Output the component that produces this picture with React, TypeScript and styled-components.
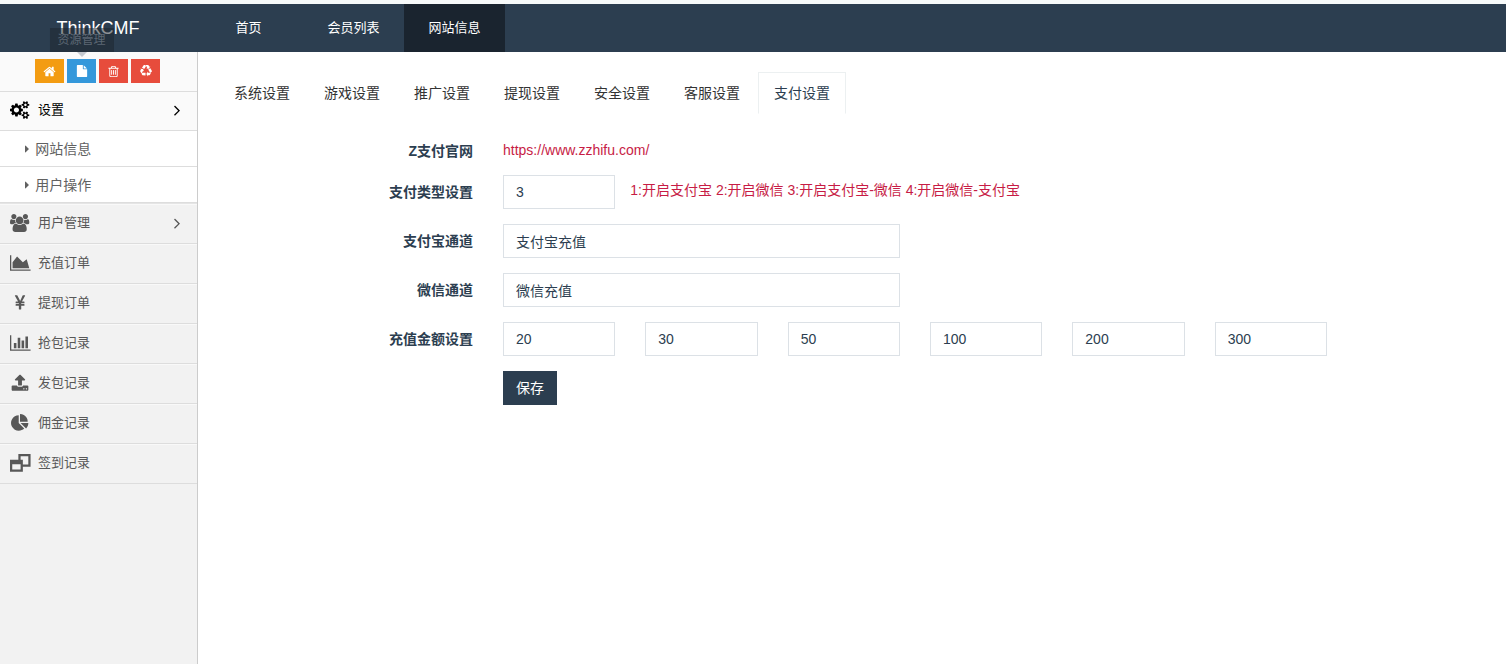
import React from "react";
import styled, { createGlobalStyle } from "styled-components";

const GlobalStyle = createGlobalStyle`
  *, *::before, *::after { box-sizing: border-box; }
  body {
    margin: 0;
    background: #fff;
    color: #2c3e50;
    font: 14px/20px "Liberation Sans", "Noto Sans CJK SC", sans-serif;
  }
  ul { list-style: none; margin: 0; padding: 0; }
  a { color: inherit; text-decoration: none; }
  button, input { font: inherit; }
`;

const smallCog =
  "v140q0 16-149 31-12 27-30 52 51 113 51 138 0 4-4 7-122 71-124 71-8 0-46-47t-52-68q-20 2-30 2t-30-2q-14 21-52 68t-46 47q-2 0-124-71-4-3-4-7 0-25 51-138-18-25-30-52-149-15-149-31v-140q0-16 149-31 13-29 30-52-51-113-51-138 0-4 4-7 4-2 35-20t59-34 30-16q8 0 46 46.5t52 67.5q20-2 30-2t30 2q51-71 92-112l6-2q4 0 124 70 4 3 4 7 0 25-51 138 17 23 30 52 149 15 149 31z";

const bar = "v576q0 14-9 23t-23 9h-64q-14 0-23-9t-9-23v-576q0-14 9-23t23-9h64q14 0 23 9t9 23z";

const icons = {
  home: {
    w: 1792,
    d: "M1472 992v480q0 26-19 45t-45 19h-384v-384h-256v384h-384q-26 0-45-19t-19-45v-480q0-1 .5-3t.5-3l575-474 575 474q1 2 1 6zm223-69l-62 74q-8 9-21 11h-3q-13 0-21-7l-692-577-692 577q-12 8-24 7-13-2-21-11l-62-74q-8-10-7-23.5t11-21.5l719-599q32-26 76-26t76 26l244 204v-195q0-14 9-23t23-9h192q14 0 23 9t9 23v408l219 182q10 8 11 21.5t-7 23.5z",
  },
  file: {
    w: 1792,
    d: "M1152 512v-472q22 14 36 28l408 408q14 14 28 36h-472zm-128 32q0 40 28 68t68 28h544v1056q0 40-28 68t-68 28h-1344q-40 0-68-28t-28-68v-1600q0-40 28-68t68-28h800v544z",
  },
  trash: {
    w: 1792,
    d: `M704 736${bar}M960 736${bar}M1216 736${bar}M1344 1460v-948h-896v948q0 22 7 40.5t14.5 27 10.5 8.5h832q3 0 10.5-8.5t14.5-27 7-40.5zm-672-1076h448l-48-117q-7-9-17-11h-317q-10 2-17 11zm928 32v64q0 14-9 23t-23 9h-96v948q0 83-47 143.5t-113 60.5h-832q-66 0-113-58.5t-47-141.5v-952h-96q-14 0-23-9t-9-23v-64q0-14 9-23t23-9h309l70-167q15-37 54-63t79-26h320q40 0 79 26t54 63l70 167h309q14 0 23 9t9 23z`,
  },
  recycle: {
    w: 1792,
    d: "M836 1169l-15 368-2 22-420-29q-36-3-67-31.5t-47-65.5q-11-27-14.5-55t4-65 12-55 21.5-64 19-53q78 12 509 28zm-387-586l180 379-147-92q-63 72-111.5 144.5t-72.5 125-39.5 94.5-18.5 63l-4 21-190-357q-17-26-18-56t6-47l8-18q35-63 114-188l-140-86zm1231 517l-188 359q-12 29-36.5 46.5t-43.5 20.5l-18 4q-71 7-219 12l8 164-230-367 211-362 7 173q170 16 283 5t170-33zm-785-924q-47 63-265 435l-317-187-19-12 225-356q20-31 60-45t80-10q24 2 48.5 12t42 21 41.5 33 36 34.5 36 39.5 32 35zm655 307l212 363q18 37 12.5 76t-27.5 74q-13 20-33 37t-38 28-48.5 22-47 16-51.5 14-46 12q-34-72-265-436l313-195zm-143-226l142-83-220 373-419-20 151-86q-34-89-75-166t-75.5-123.5-64.5-80-47-46.5l-17-13 405 1q31-3 58 10.5t39 28.5l11 15q39 56 112 190z",
  },
  cogs: {
    w: 1920,
    d: `M896 896q0-106-75-181t-181-75-181 75-75 181 75 181 181 75 181-75 75-181zm768 512q0-52-38-90t-90-38-90 38-38 90q0 53 37.5 90.5t90.5 37.5 90.5-37.5 37.5-90.5zm0-1024q0-52-38-90t-90-38-90 38-38 90q0 53 37.5 90.5t90.5 37.5 90.5-37.5 37.5-90.5zm-384 421v185q0 10-7 19.5t-16 10.5l-155 24q-11 35-32 76 34 48 90 115 7 11 7 20 0 12-7 19-23 30-82.5 89.5t-78.5 59.5q-11 0-21-7l-115-90q-37 19-77 31-11 108-23 155-7 24-30 24h-186q-11 0-20-7.5t-10-17.5l-23-153q-34-10-75-31l-118 89q-7 7-20 7-11 0-21-8-144-133-144-160 0-9 7-19 10-14 41-53t47-61q-23-44-35-82l-152-24q-10-1-17-9.5t-7-19.5v-185q0-10 7-19.5t16-10.5l155-24q11-35 32-76-34-48-90-115-7-11-7-20 0-12 7-20 22-30 82-89t79-59q11 0 21 7l115 90q34-18 77-32 11-108 23-154 7-24 30-24h186q11 0 20 7.5t10 17.5l23 153q34 10 75 31l118-89q8-7 20-7 11 0 21 8 144 133 144 160 0 9-7 19-12 16-42 54t-45 60q23 48 34 82l152 23q10 2 17 10.5t7 19.5zM1920 1338${smallCog}M1920 314${smallCog}`,
  },
  users: {
    w: 1920,
    d: "M593 896q-162 5-265 128h-134q-82 0-138-40.5t-56-118.5q0-353 124-353 6 0 43.5 21t97.5 42.5 119 21.5q67 0 133-23-5 37-5 66 0 139 81 256zm1071 637q0 120-73 189.5t-194 69.5h-874q-121 0-194-69.5t-73-189.5q0-53 3.5-103.5t14-109 26.5-108.5 43-97.5 62-81 85.5-53.5 111.5-20q10 0 43 21.5t73 48 107 48 135 21.5 135-21.5 107-48 73-48 43-21.5q61 0 111.5 20t85.5 53.5 62 81 43 97.5 26.5 108.5 14 109 3.5 103.5zm-1024-1277q0 106-75 181t-181 75-181-75-75-181 75-181 181-75 181 75 75 181zm704 384q0 159-112.5 271.5t-271.5 112.5-271.5-112.5-112.5-271.5 112.5-271.5 271.5-112.5 271.5 112.5 112.5 271.5zm576 225q0 78-56 118.5t-138 40.5h-134q-103-123-265-128 81-117 81-256 0-29-5-66 66 23 133 23 59 0 119-21.5t97.5-42.5 43.5-21q124 0 124 353zm-128-609q0 106-75 181t-181 75-181-75-75-181 75-181 181-75 181 75 75 181z",
  },
  area: {
    w: 2048,
    d: "M2048 1536v128h-2048v-1536h128v1408h1920zm-384-1024l256 896h-1664v-576l448-576 576 576z",
  },
  yen: {
    w: 1792,
    d: "M985.5 1536h-172q-13 0-22.5-9t-9.5-23v-330h-288q-13 0-22.5-9t-9.5-23v-103q0-13 9.5-22.5t22.5-9.5h288v-85h-288q-13 0-22.5-9t-9.5-23v-104q0-13 9.5-22.5t22.5-9.5h214l-321-578q-8-16 0-32 10-16 28-16h194q19 0 29 18l215 425q19 38 56 125 10-24 30.5-68t27.5-61l191-420q8-19 29-19h191q17 0 27 16 9 14 1 31l-313 579h215q13 0 22.5 9.5t9.5 22.5v104q0 14-9.5 23t-22.5 9h-290v85h290q13 0 22.5 9.5t9.5 22.5v103q0 14-9.5 23t-22.5 9h-290v330q0 13-9.5 22.5t-22.5 9.5z",
  },
  bars: {
    w: 2048,
    d: "M640 896v512h-256v-512h256zm384-512v1024h-256v-1024h256zm1024 1152v128h-2048v-1536h128v1408h1920zm-640-896v768h-256v-768h256zm384-384v1152h-256v-1152h256z",
  },
  upload: {
    w: 1792,
    d: "M1344 1472q0-26-19-45t-45-19-45 19-19 45 19 45 45 19 45-19 19-45zm256 0q0-26-19-45t-45-19-45 19-19 45 19 45 45 19 45-19 19-45zm128-224v320q0 40-28 68t-68 28h-1472q-40 0-68-28t-28-68v-320q0-40 28-68t68-28h427q21 56 70.5 92t110.5 36h256q61 0 110.5-36t70.5-92h427q40 0 68 28t28 68zm-325-648q-17 40-59 40h-256v448q0 26-19 45t-45 19h-256q-26 0-45-19t-19-45v-448h-256q-42 0-59-40-17-39 14-69l448-448q18-19 45-19t45 19l448 448q31 30 14 69z",
  },
  pie: {
    w: 1792,
    d: "M768 890l546 546q-106 108-247.5 168t-298.5 60q-209 0-385.5-103t-279.5-279.5-103-385.5 103-385.5 279.5-279.5 385.5-103v762zm187 6h773q0 157-60 298.5t-168 247.5zm709-128h-768v-768q209 0 385.5 103t279.5 279.5 103 385.5z",
  },
  restore: {
    w: 2048,
    d: "M224 1536h832v-512h-832zM832 576v-576h1216v1280h-768v-224h544v-832h-768v352zM1280 576v1184h-1280v-1184z",
  },
  angle: {
    w: 640,
    d: "M595 960q0 13-10 23l-466 466q-10 10-23 10t-23-10l-50-50q-10-10-10-23t10-23l393-393-393-393q-10-10-10-23t10-23l50-50q10-10 23-10t23 10l466 466q10 10 10 23z",
  },
  caret: { w: 640, d: "M576 896q0 26-19 45l-448 448q-19 19-45 19t-45-19-19-45v-896q0-26 19-45t45-19 45 19l448 448q19 19 19 45z" },
};
type IconName = keyof typeof icons;

const Glyph = styled.svg`
  display: block;
  flex: none;
  fill: currentColor;
  overflow: visible;
`;

function Icon({ name, size }: { name: IconName; size: number }) {
  const { w, d } = icons[name];
  return (
    <Glyph viewBox={`0 0 ${w} 1792`} height={size} width={(size * w) / 1792} aria-hidden="true">
      <path d={d} fillRule={name === "restore" ? "evenodd" : "nonzero"} />
    </Glyph>
  );
}

const Page = styled.div`
  display: flex;
  flex-direction: column;
  min-height: 100vh;
`;

const Header = styled.header`
  display: flex;
  height: 52px;
  border-top: 4px solid #f7fafa;
  background: #2c3e50;
  color: #fff;
`;

const Brand = styled.a`
  width: 198px;
  padding-right: 2px;
  line-height: 48px;
  font-size: 18px;
  text-align: center;
`;

const TopNav = styled.nav`
  display: flex;
  gap: 4px;
`;

const TopTabs = styled.ul`
  display: flex;
`;

const TopLink = styled.a<{ $active?: boolean }>`
  display: block;
  width: 101px;
  line-height: 48px;
  font-size: 13px;
  text-align: center;
  background: ${(p) => (p.$active ? "#1a242f" : "transparent")};
`;

const Body = styled.div`
  display: flex;
  flex: 1;
`;

const Sidebar = styled.aside`
  flex: none;
  width: 198px;
  border-right: 1px solid #ccc;
  background: #f2f2f2;
`;

const Shortcuts = styled.div`
  display: flex;
  justify-content: center;
  gap: 3px;
  height: 40px;
  padding: 7px 2px 0 0;
  border-bottom: 1px solid #ddd;
  background: #fafafa;
`;

const Shortcut = styled.button<{ $color: string }>`
  position: relative;
  display: flex;
  align-items: center;
  justify-content: center;
  width: 29px;
  height: 24px;
  padding: 0;
  border: 0;
  color: #fff;
  background: ${(p) => p.$color};
`;

const Tooltip = styled.span`
  position: absolute;
  bottom: 31px;
  left: 50%;
  transform: translateX(-50%);
  padding: 2px 8px;
  background: rgba(27, 35, 43, 0.5);
  color: #5c6773;
  font-size: 12px;
  white-space: nowrap;

  &::after {
    content: "";
    position: absolute;
    top: 100%;
    left: 50%;
    margin-left: -5px;
    border: 5px solid transparent;
    border-top-color: #c4c8cf;
    border-bottom: 0;
  }
`;

const MenuLink = styled.a<{ $open?: boolean }>`
  display: flex;
  align-items: center;
  gap: 8px;
  height: ${(p) => (p.$open ? 39 : 40)}px;
  padding: 0 17px ${(p) => (p.$open ? 4 : 2)}px 10px;
  border-top: 1px solid ${(p) => (p.$open ? "#fafafa" : "#f9f9f9")};
  border-bottom: 1px solid #ddd;
  background: ${(p) => (p.$open ? "#fafafa" : "#f2f2f2")};
  color: ${(p) => (p.$open ? "#000" : "#585858")};
  font-size: 13px;
`;

const MenuIcon = styled.span`
  display: flex;
  justify-content: center;
  width: 20px;
`;

const MenuText = styled.span`
  flex: 1;
`;

const Submenu = styled.ul`
  border-bottom: 1px solid #e5e5e5;
  background: #fff;
`;

const SubLink = styled.a`
  display: flex;
  align-items: center;
  gap: 6px;
  height: 36px;
  padding-left: 25px;
  border-bottom: 1px solid #ddd;
  color: #616161;
`;

const Main = styled.main`
  flex: 1;
  min-width: 0;
  padding: 20px;
`;

const Tabs = styled.ul`
  display: flex;
  gap: 2px;
  margin-bottom: 20px;
`;

const Tab = styled.a<{ $active?: boolean }>`
  display: block;
  height: 42px;
  padding: 10px 15px;
  border: 1px solid ${(p) => (p.$active ? "#ecf0f1" : "transparent")};
  border-bottom-color: transparent;
  color: ${(p) => (p.$active ? "#2c3e50" : "#333")};
`;

const Form = styled.form`
  display: flex;
  flex-direction: column;
  gap: 15px;
  padding-right: 159px;
`;

const Row = styled.div<{ $compact?: boolean }>`
  display: grid;
  grid-template-columns: 255px repeat(6, minmax(0, 1fr));
  column-gap: 30px;
  align-items: center;
  height: ${(p) => (p.$compact ? 26 : 34)}px;
`;

const Label = styled.label`
  font-weight: 700;
  text-align: right;
`;

const Caption = styled.span`
  align-self: end;
  margin-bottom: -1px;
  font-weight: 700;
  text-align: right;
`;

const Field = styled.input<{ $span?: number }>`
  grid-column: span ${(p) => p.$span ?? 1};
  width: 100%;
  height: 34px;
  padding: 6px 12px;
  border: 1px solid #dce1e6;
  border-radius: 0;
  outline: 0;
  background: #fff;
  color: #2c3e50;
`;

const SiteLink = styled.a`
  grid-column: span 3;
  align-self: end;
  color: #c71c45;
`;

const Hint = styled.span`
  grid-column: span 5;
  margin-left: -15px;
  padding-bottom: 4px;
  color: #c71c45;
  white-space: nowrap;
`;

const Save = styled.button`
  grid-column: 2;
  justify-self: start;
  height: 34px;
  padding: 0 13px;
  border: 0;
  background: #2c3e50;
  color: #fff;
`;

const menu: { icon: IconName; text: string; more?: boolean }[] = [
  { icon: "users", text: "用户管理", more: true },
  { icon: "area", text: "充值订单" },
  { icon: "yen", text: "提现订单" },
  { icon: "bars", text: "抢包记录" },
  { icon: "upload", text: "发包记录" },
  { icon: "pie", text: "佣金记录" },
  { icon: "restore", text: "签到记录" },
];
const tabs = ["系统设置", "游戏设置", "推广设置", "提现设置", "安全设置", "客服设置", "支付设置"];
const amounts = ["20", "30", "50", "100", "200", "300"];

export default function App() {
  return (
    <Page>
      <GlobalStyle />
      <Header>
        <Brand href="#">ThinkCMF</Brand>
        <TopNav>
          <TopLink href="#">首页</TopLink>
          <TopTabs>
            <li><TopLink href="#">会员列表</TopLink></li>
            <li><TopLink href="#" $active>网站信息</TopLink></li>
          </TopTabs>
        </TopNav>
      </Header>
      <Body>
        <Sidebar>
          <Shortcuts>
            <Shortcut type="button" $color="#f39c12" aria-label="前台首页"><Icon name="home" size={13} /></Shortcut>
            <Shortcut type="button" $color="#3498db">
              <Icon name="file" size={12} />
              <Tooltip role="tooltip">资源管理</Tooltip>
            </Shortcut>
            <Shortcut type="button" $color="#e74c3c" aria-label="回收站"><Icon name="trash" size={13} /></Shortcut>
            <Shortcut type="button" $color="#e74c3c" aria-label="清除缓存"><Icon name="recycle" size={12} /></Shortcut>
          </Shortcuts>
          <nav>
            <MenuLink href="#" $open>
              <MenuIcon><Icon name="cogs" size={18} /></MenuIcon>
              <MenuText>设置</MenuText>
              <Icon name="angle" size={18} />
            </MenuLink>
            <Submenu>
              {["网站信息", "用户操作"].map((text) => (
                <li key={text}><SubLink href="#"><Icon name="caret" size={12} />{text}</SubLink></li>
              ))}
            </Submenu>
            <ul>
              {menu.map((item) => (
                <li key={item.text}>
                  <MenuLink href="#">
                    <MenuIcon><Icon name={item.icon} size={18} /></MenuIcon>
                    <MenuText>{item.text}</MenuText>
                    {item.more && <Icon name="angle" size={18} />}
                  </MenuLink>
                </li>
              ))}
            </ul>
          </nav>
        </Sidebar>
        <Main>
          <Tabs>
            {tabs.map((text) => (
              <li key={text}><Tab href="#" $active={text === "支付设置"}>{text}</Tab></li>
            ))}
          </Tabs>
          <Form onSubmit={(e) => e.preventDefault()}>
            <Row $compact>
              <Caption>Z支付官网</Caption>
              <SiteLink href="#">https://www.zzhifu.com/</SiteLink>
            </Row>
            <Row>
              <Label htmlFor="type">支付类型设置</Label>
              <Field id="type" defaultValue="3" />
              <Hint>1:开启支付宝 2:开启微信 3:开启支付宝-微信 4:开启微信-支付宝</Hint>
            </Row>
            <Row>
              <Label htmlFor="alipay">支付宝通道</Label>
              <Field id="alipay" $span={3} defaultValue="支付宝充值" />
            </Row>
            <Row>
              <Label htmlFor="wechat">微信通道</Label>
              <Field id="wechat" $span={3} defaultValue="微信充值" />
            </Row>
            <Row>
              <Label htmlFor="amount-20">充值金额设置</Label>
              {amounts.map((n) => (
                <Field key={n} id={`amount-${n}`} aria-label={`充值金额设置 ${n}`} defaultValue={n} />
              ))}
            </Row>
            <Row>
              <Save type="submit">保存</Save>
            </Row>
          </Form>
        </Main>
      </Body>
    </Page>
  );
}
